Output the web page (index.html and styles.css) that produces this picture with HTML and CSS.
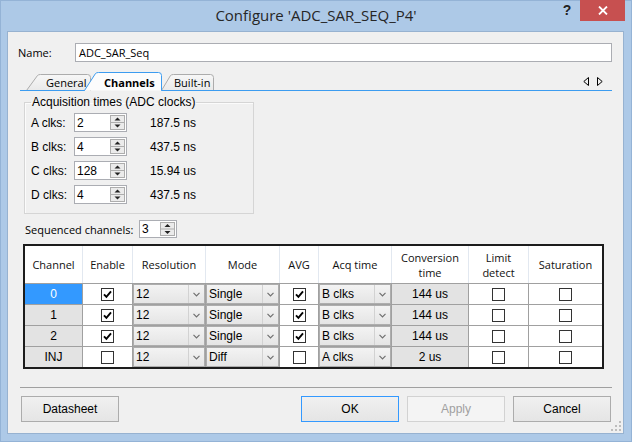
FILE: index.html
```html
<!DOCTYPE html>
<html>
<head>
<meta charset="utf-8">
<title>Configure</title>
<link rel="stylesheet" href="styles.css">
</head>
<body>
<div class="window">
  <div class="titlebar">
    <div></div>
    <div class="title">Configure 'ADC_SAR_SEQ_P4'</div>
    <div class="caption-btns">
      <div class="help">?</div>
      <div class="close"><svg width="10" height="9" viewBox="0 0 10 9"><path d="M1 0.5 L9 8.5 M9 0.5 L1 8.5" stroke="#fff" stroke-width="1.8"/></svg></div>
    </div>
  </div>

  <div class="client">
    <div class="name-row">
      <span class="name-label">Name:</span>
      <div class="textbox">ADC_SAR_Seq</div>
    </div>

    <div class="tabstrip">
      <svg class="tabs-bg" width="592" height="19" viewBox="0 0 592 19">
        <defs>
          <linearGradient id="tg" x1="0" y1="0" x2="0" y2="1">
            <stop offset="0" stop-color="#f7f7f7"/>
            <stop offset="1" stop-color="#e9e9e9"/>
          </linearGradient>
        </defs>
        <path d="M6.5 18.5 L17.5 3.5 Q18.5 2.5 20.5 2.5 L67.5 2.5 Q70.5 2.5 70.5 5.5 L70.5 18.5" fill="url(#tg)" stroke="#acacac"/>
        <path d="M141.5 18.5 L150.5 3.5 Q151.5 2.5 153.5 2.5 L190.5 2.5 Q193.5 2.5 193.5 5.5 L193.5 18.5" fill="url(#tg)" stroke="#acacac"/>
        <path d="M0 18.5 H65 M141 18.5 H592" stroke="#3c9cf0"/>
        <path d="M64.5 18.5 L75.5 1.5 Q76.5 0.5 78.5 0.5 L138.5 0.5 Q141.5 0.5 141.5 3.5 L141.5 18.5" fill="#fcfcfc" stroke="#3c9cf0"/>
      </svg>
      <span class="tab t-general">General</span>
      <span class="tab t-channels">Channels</span>
      <span class="tab t-builtin">Built-in</span>
      <div class="tab-arrows">
        <svg width="6" height="9" viewBox="0 0 6 9"><path d="M5.5 0.5 L0.8 4.5 L5.5 8.5 Z" fill="none" stroke="#000"/></svg>
        <svg width="6" height="9" viewBox="0 0 6 9"><path d="M0.5 0.5 L5.2 4.5 L0.5 8.5 Z" fill="none" stroke="#000"/></svg>
      </div>
    </div>

    <div class="panel">
      <fieldset class="group">
        <legend>Acquisition times (ADC clocks)</legend>
        <div class="acq-row">
          <span class="acq-label">A clks:</span>
          <div class="spin w53"><span>2</span><svg width="15" height="15" viewBox="0 0 15 15"><rect x="0.5" y="0.5" width="14" height="14" fill="#ebebeb" stroke="#adadad"/><line x1="1" y1="7.5" x2="14" y2="7.5" stroke="#adadad"/><path d="M4.5 5.5 L7.5 2.5 L10.5 5.5Z" fill="#222"/><path d="M4.5 9.5 L7.5 12.5 L10.5 9.5Z" fill="#222"/></svg></div>
          <span class="acq-val">187.5 ns</span>
        </div>
        <div class="acq-row">
          <span class="acq-label">B clks:</span>
          <div class="spin w53"><span>4</span><svg width="15" height="15" viewBox="0 0 15 15"><rect x="0.5" y="0.5" width="14" height="14" fill="#ebebeb" stroke="#adadad"/><line x1="1" y1="7.5" x2="14" y2="7.5" stroke="#adadad"/><path d="M4.5 5.5 L7.5 2.5 L10.5 5.5Z" fill="#222"/><path d="M4.5 9.5 L7.5 12.5 L10.5 9.5Z" fill="#222"/></svg></div>
          <span class="acq-val">437.5 ns</span>
        </div>
        <div class="acq-row">
          <span class="acq-label">C clks:</span>
          <div class="spin w53"><span>128</span><svg width="15" height="15" viewBox="0 0 15 15"><rect x="0.5" y="0.5" width="14" height="14" fill="#ebebeb" stroke="#adadad"/><line x1="1" y1="7.5" x2="14" y2="7.5" stroke="#adadad"/><path d="M4.5 5.5 L7.5 2.5 L10.5 5.5Z" fill="#222"/><path d="M4.5 9.5 L7.5 12.5 L10.5 9.5Z" fill="#222"/></svg></div>
          <span class="acq-val">15.94 us</span>
        </div>
        <div class="acq-row">
          <span class="acq-label">D clks:</span>
          <div class="spin w53"><span>4</span><svg width="15" height="15" viewBox="0 0 15 15"><rect x="0.5" y="0.5" width="14" height="14" fill="#ebebeb" stroke="#adadad"/><line x1="1" y1="7.5" x2="14" y2="7.5" stroke="#adadad"/><path d="M4.5 5.5 L7.5 2.5 L10.5 5.5Z" fill="#222"/><path d="M4.5 9.5 L7.5 12.5 L10.5 9.5Z" fill="#222"/></svg></div>
          <span class="acq-val">437.5 ns</span>
        </div>
      </fieldset>

      <div class="seq-row">
        <span class="seq-label">Sequenced channels:</span>
        <div class="spin seq"><span>3</span><svg width="15" height="14" viewBox="0 0 15 14"><rect x="0.5" y="0.5" width="14" height="13" fill="#ebebeb" stroke="#adadad"/><line x1="1" y1="7" x2="14" y2="7" stroke="#adadad"/><path d="M4.5 5 L7.5 2 L10.5 5Z" fill="#222"/><path d="M4.5 9 L7.5 12 L10.5 9Z" fill="#222"/></svg></div>
      </div>

      <div class="table">
        <div class="thead">
          <div class="th">Channel</div>
          <div class="th">Enable</div>
          <div class="th">Resolution</div>
          <div class="th">Mode</div>
          <div class="th">AVG</div>
          <div class="th">Acq time</div>
          <div class="th two"><span>Conversion</span><span>time</span></div>
          <div class="th two"><span>Limit</span><span>detect</span></div>
          <div class="th">Saturation</div>
        </div>
        <div class="tbody">
          <!-- row 0 -->
          <div class="c-ch sel">0</div>
          <div class="c-w"><span class="chk"><svg width="11" height="11" viewBox="0 0 11 11"><path d="M2 5.3 L4.4 7.8 L9 2.3" fill="none" stroke="#000" stroke-width="1.9"/></svg></span></div>
          <div class="combo"><span class="combo-text">12</span><span class="combo-btn"><svg width="7" height="5" viewBox="0 0 7 5"><path d="M0.5 0.8 L3.5 3.8 L6.5 0.8" fill="none" stroke="#707070" stroke-width="1.2"/></svg></span></div>
          <div class="combo"><span class="combo-text">Single</span><span class="combo-btn"><svg width="7" height="5" viewBox="0 0 7 5"><path d="M0.5 0.8 L3.5 3.8 L6.5 0.8" fill="none" stroke="#707070" stroke-width="1.2"/></svg></span></div>
          <div class="c-w"><span class="chk"><svg width="11" height="11" viewBox="0 0 11 11"><path d="M2 5.3 L4.4 7.8 L9 2.3" fill="none" stroke="#000" stroke-width="1.9"/></svg></span></div>
          <div class="combo"><span class="combo-text">B clks</span><span class="combo-btn"><svg width="7" height="5" viewBox="0 0 7 5"><path d="M0.5 0.8 L3.5 3.8 L6.5 0.8" fill="none" stroke="#707070" stroke-width="1.2"/></svg></span></div>
          <div class="c-conv">144 us</div>
          <div class="c-w"><span class="chk"></span></div>
          <div class="c-w"><span class="chk"></span></div>
          <!-- row 1 -->
          <div class="c-ch">1</div>
          <div class="c-w"><span class="chk"><svg width="11" height="11" viewBox="0 0 11 11"><path d="M2 5.3 L4.4 7.8 L9 2.3" fill="none" stroke="#000" stroke-width="1.9"/></svg></span></div>
          <div class="combo"><span class="combo-text">12</span><span class="combo-btn"><svg width="7" height="5" viewBox="0 0 7 5"><path d="M0.5 0.8 L3.5 3.8 L6.5 0.8" fill="none" stroke="#707070" stroke-width="1.2"/></svg></span></div>
          <div class="combo"><span class="combo-text">Single</span><span class="combo-btn"><svg width="7" height="5" viewBox="0 0 7 5"><path d="M0.5 0.8 L3.5 3.8 L6.5 0.8" fill="none" stroke="#707070" stroke-width="1.2"/></svg></span></div>
          <div class="c-w"><span class="chk"><svg width="11" height="11" viewBox="0 0 11 11"><path d="M2 5.3 L4.4 7.8 L9 2.3" fill="none" stroke="#000" stroke-width="1.9"/></svg></span></div>
          <div class="combo"><span class="combo-text">B clks</span><span class="combo-btn"><svg width="7" height="5" viewBox="0 0 7 5"><path d="M0.5 0.8 L3.5 3.8 L6.5 0.8" fill="none" stroke="#707070" stroke-width="1.2"/></svg></span></div>
          <div class="c-conv">144 us</div>
          <div class="c-w"><span class="chk"></span></div>
          <div class="c-w"><span class="chk"></span></div>
          <!-- row 2 -->
          <div class="c-ch">2</div>
          <div class="c-w"><span class="chk"><svg width="11" height="11" viewBox="0 0 11 11"><path d="M2 5.3 L4.4 7.8 L9 2.3" fill="none" stroke="#000" stroke-width="1.9"/></svg></span></div>
          <div class="combo"><span class="combo-text">12</span><span class="combo-btn"><svg width="7" height="5" viewBox="0 0 7 5"><path d="M0.5 0.8 L3.5 3.8 L6.5 0.8" fill="none" stroke="#707070" stroke-width="1.2"/></svg></span></div>
          <div class="combo"><span class="combo-text">Single</span><span class="combo-btn"><svg width="7" height="5" viewBox="0 0 7 5"><path d="M0.5 0.8 L3.5 3.8 L6.5 0.8" fill="none" stroke="#707070" stroke-width="1.2"/></svg></span></div>
          <div class="c-w"><span class="chk"><svg width="11" height="11" viewBox="0 0 11 11"><path d="M2 5.3 L4.4 7.8 L9 2.3" fill="none" stroke="#000" stroke-width="1.9"/></svg></span></div>
          <div class="combo"><span class="combo-text">B clks</span><span class="combo-btn"><svg width="7" height="5" viewBox="0 0 7 5"><path d="M0.5 0.8 L3.5 3.8 L6.5 0.8" fill="none" stroke="#707070" stroke-width="1.2"/></svg></span></div>
          <div class="c-conv">144 us</div>
          <div class="c-w"><span class="chk"></span></div>
          <div class="c-w"><span class="chk"></span></div>
          <!-- row INJ -->
          <div class="c-ch">INJ</div>
          <div class="c-w"><span class="chk"></span></div>
          <div class="combo"><span class="combo-text">12</span><span class="combo-btn"><svg width="7" height="5" viewBox="0 0 7 5"><path d="M0.5 0.8 L3.5 3.8 L6.5 0.8" fill="none" stroke="#707070" stroke-width="1.2"/></svg></span></div>
          <div class="combo"><span class="combo-text">Diff</span><span class="combo-btn"><svg width="7" height="5" viewBox="0 0 7 5"><path d="M0.5 0.8 L3.5 3.8 L6.5 0.8" fill="none" stroke="#707070" stroke-width="1.2"/></svg></span></div>
          <div class="c-w"><span class="chk"></span></div>
          <div class="combo"><span class="combo-text">A clks</span><span class="combo-btn"><svg width="7" height="5" viewBox="0 0 7 5"><path d="M0.5 0.8 L3.5 3.8 L6.5 0.8" fill="none" stroke="#707070" stroke-width="1.2"/></svg></span></div>
          <div class="c-conv">2 us</div>
          <div class="c-w"><span class="chk"></span></div>
          <div class="c-w"><span class="chk"></span></div>
        </div>
      </div>
    </div>

    <div class="separator"></div>

    <div class="buttons">
      <div class="btn datasheet">Datasheet</div>
      <div class="btn ok">OK</div>
      <div class="btn disabled">Apply</div>
      <div class="btn">Cancel</div>
    </div>

    <svg class="grip" width="10" height="10" viewBox="0 0 10 10">
      <rect x="8" y="0" width="2" height="2" fill="#bdbdbd"/>
      <rect x="4" y="4" width="2" height="2" fill="#bdbdbd"/>
      <rect x="8" y="4" width="2" height="2" fill="#bdbdbd"/>
      <rect x="0" y="8" width="2" height="2" fill="#bdbdbd"/>
      <rect x="4" y="8" width="2" height="2" fill="#bdbdbd"/>
      <rect x="8" y="8" width="2" height="2" fill="#bdbdbd"/>
    </svg>
  </div>
</div>
</body>
</html>
```

FILE: styles.css
```css
* { box-sizing: border-box; }
html, body { margin: 0; padding: 0; }
body {
  width: 632px;
  height: 442px;
  overflow: hidden;
  background: #adc9e7;
  font-family: "Liberation Sans", Arial, sans-serif;
  font-size: 12px;
  color: #000;
}

.window {
  width: 632px;
  height: 442px;
  background: #adc9e7;
  box-shadow: inset 0 0 0 1px #94b3d6;
  display: flex;
  flex-direction: column;
}

/* ---------- title bar ---------- */
.titlebar {
  height: 31px;
  flex: none;
  display: grid;
  grid-template-columns: 1fr auto 1fr;
  padding: 0 7px;
}
.title {
  font-family: "Open Sans", sans-serif;
  font-size: 15px;
  line-height: 31px;
  color: #262626;
  white-space: nowrap;
}
.caption-btns {
  display: flex;
  justify-content: flex-end;
  align-items: flex-start;
}
.help {
  width: 26px;
  height: 21px;
  line-height: 21px;
  text-align: center;
  font-family: "Liberation Sans", Arial, sans-serif;
  font-weight: bold;
  font-size: 14px;
  color: #222;
}
.close {
  width: 45px;
  height: 21px;
  background: #c75050;
  display: flex;
  align-items: center;
  justify-content: center;
}

/* ---------- client ---------- */
.client {
  position: relative;
  margin: 0 8px 0 7px;
  height: 403px;
  flex: none;
  border: 1px solid #97b2d0;
  background: #f0f0f0;
  padding: 0 11px 0 12px;
  display: flex;
  flex-direction: column;
}

.name-row {
  display: flex;
  align-items: center;
  margin-top: 11px;
  height: 19px;
}
.name-label {
  margin-left: -2px;
  width: 57px;
  font-family: "Open Sans", sans-serif;
  font-size: 11px;
}
.textbox {
  flex: 1;
  height: 19px;
  border: 1px solid #abadb3;
  background: #fff;
  padding-left: 3px;
  line-height: 17px;
  font-family: "Open Sans", sans-serif;
  font-size: 11px;
}

/* ---------- tabs ---------- */
.tabstrip {
  position: relative;
  height: 19px;
  margin-top: 10px;
  display: flex;
  align-items: flex-start;
  font-family: "Open Sans", sans-serif;
  font-size: 11px;
}
.tabs-bg {
  position: absolute;
  left: 0;
  top: 0;
}
.tab {
  position: relative;
  padding-top: 4px;
  line-height: 14px;
  white-space: nowrap;
}
.t-general { margin-left: 26px; width: 58px; }
.t-channels { width: 70px; font-weight: bold; }
.t-builtin { width: 60px; }
.tab-arrows {
  position: relative;
  margin-left: auto;
  margin-right: 9px;
  margin-top: 5px;
  display: flex;
  gap: 8px;
}
.tab-arrows svg { display: block; }

/* ---------- panel ---------- */
.panel {
  display: flex;
  flex-direction: column;
  align-items: flex-start;
}
.group {
  margin: 4px 0 0 4px;
  width: 230px;
  min-width: 0;
  padding: 4px 0 9px 6px;
  border: 1px solid #d5d5d5;
  box-shadow: inset 1px 1px 0 #fbfbfb;
  display: flex;
  flex-direction: column;
  gap: 5px;
}
.group legend {
  padding: 0 1px;
  line-height: 14px;
  font-size: 12px;
}
.acq-row {
  display: flex;
  align-items: center;
  height: 19px;
}
.acq-label { width: 43px; }
.acq-val { margin-left: 23px; }

.spin {
  height: 19px;
  border: 1px solid #abadb3;
  background: #fff;
  display: flex;
  align-items: center;
  justify-content: space-between;
  padding-left: 2px;
}
.spin svg { display: block; margin-right: 1px; }
.w53 { width: 53px; }

.seq-row {
  margin: 6px 0 0 5px;
  display: flex;
  align-items: center;
  height: 18px;
}
.seq-label {
  width: 114px;
  font-family: "Open Sans", sans-serif;
  font-size: 11px;
}
.spin.seq { width: 38px; height: 18px; }

/* ---------- table ---------- */
.table {
  margin: 6px 0 0 3px;
  border: 2px solid #1c1c1c;
}
.thead, .tbody {
  display: grid;
  grid-template-columns: 57px 49px 72px 73px 38px 72px 76px 59px 73px;
}
.thead {
  height: 38px;
  column-gap: 1px;
  background: #e2e8f0;
  border-bottom: 1px solid #a0a0a0;
}
.th {
  background: #fff;
  display: flex;
  align-items: center;
  justify-content: center;
  text-align: center;
  font-family: "Open Sans", sans-serif;
  font-size: 11px;
  line-height: 15px;
  color: #111;
}
.th.two {
  flex-direction: column;
  line-height: 15px;
}
.tbody {
  grid-auto-rows: 20px;
  gap: 1px;
  background: #a0a0a0;
}
.c-ch, .c-conv {
  background: #e3e3e3;
  display: flex;
  align-items: center;
  justify-content: center;
}
.c-ch.sel {
  background: #3399ff;
  color: #fff;
}
.c-w {
  background: #fff;
  display: flex;
  align-items: center;
  justify-content: center;
}
.chk {
  width: 13px;
  height: 13px;
  border: 1px solid #333;
  background: #fff;
  display: flex;
  align-items: center;
  justify-content: center;
}
.chk svg { display: block; }
.combo {
  display: flex;
  border: 1px solid #adadad;
  background: linear-gradient(#f3f3f3, #e5e5e5);
}
.combo-text {
  flex: 1;
  padding-left: 2px;
  line-height: 18px;
  white-space: nowrap;
}
.combo-btn {
  width: 16px;
  border-left: 1px solid #d2d2d2;
  display: flex;
  align-items: center;
  justify-content: center;
}
.combo-btn svg { display: block; }

/* ---------- bottom ---------- */
.separator {
  margin-top: 18px;
  height: 1px;
  background: #a0a0a0;
}
.buttons {
  margin-top: 8px;
  display: flex;
  gap: 8px;
  height: 26px;
  padding: 0 1px;
}
.btn {
  width: 98px;
  height: 26px;
  border: 1px solid #acacac;
  background: linear-gradient(#f0f0f0, #e5e5e5);
  display: flex;
  align-items: center;
  justify-content: center;
}
.btn.datasheet { margin-right: auto; }
.btn.ok { border-color: #3399ff; }
.btn.disabled {
  color: #a0a0a0;
  border-color: #d2d2d2;
  background: #f4f4f4;
}
.grip {
  position: absolute;
  right: 2px;
  bottom: 2px;
}
```
